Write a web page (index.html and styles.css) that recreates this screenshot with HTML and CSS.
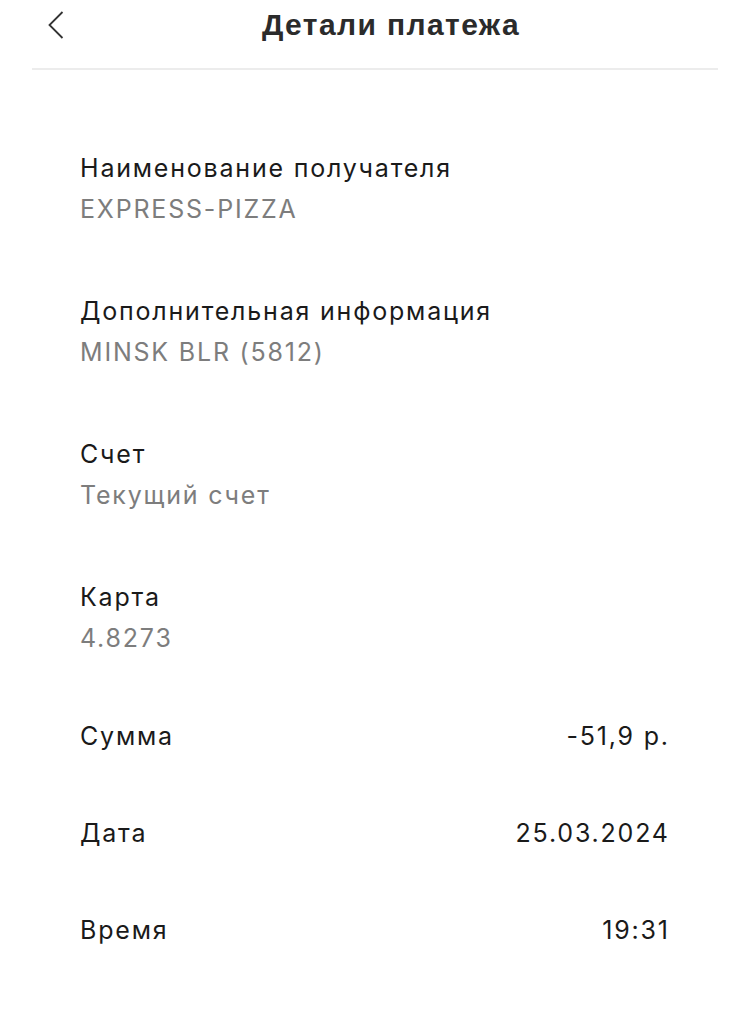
FILE: index.html
```html
<!DOCTYPE html>
<html lang="ru">
  <head>
    <meta charset="UTF-8" />
    <meta name="viewport" content="width=device-width, initial-scale=1.0" />
    <title>Детали платежа</title>
    <link rel="stylesheet" href="styles.css">
  </head>
  <body>
    <header class="topbar">
      <button class="back" aria-label="Назад">
        <svg width="16" height="28" viewBox="0 0 16 28">
          <polyline points="14.5,1 1.5,14 14.5,27" fill="none" stroke="#333" stroke-width="1.8" />
        </svg>
      </button>
      <h1>Детали платежа</h1>
      <span></span>
    </header>

    <main class="details">
      <div class="field">
        <div class="label">Наименование получателя</div>
        <div class="value">EXPRESS-PIZZA</div>
      </div>
      <div class="field">
        <div class="label">Дополнительная информация</div>
        <div class="value">MINSK BLR (5812)</div>
      </div>
      <div class="field">
        <div class="label">Счет</div>
        <div class="value">Текущий счет</div>
      </div>
      <div class="field">
        <div class="label">Карта</div>
        <div class="value">4.8273</div>
      </div>

      <div class="rows">
        <div class="row">
          <span class="label">Сумма</span>
          <span class="amount">-51,9 р.</span>
        </div>
        <div class="row">
          <span class="label">Дата</span>
          <span class="amount">25.03.2024</span>
        </div>
        <div class="row">
          <span class="label">Время</span>
          <span class="amount">19:31</span>
        </div>
      </div>
    </main>
  </body>
</html>
```

FILE: styles.css
```css
body {
  margin: 0;
  background: #fff;
  font-family: Inter, 'Noto Sans', sans-serif;
  color: #1a1a1a;
}
.topbar {
  display: grid;
  grid-template-columns: 48px 1fr 16px;
  align-items: center;
  height: 68px;
  margin: 0 32px;
  border-bottom: 2px solid #ececec;
}
.back {
  background: none;
  border: none;
  padding: 0;
  margin: 0 0 0 16px;
  width: 16px;
  height: 28px;
  display: flex;
  align-items: center;
  margin-top: -18px;
  cursor: pointer;
}
.topbar h1 {
  margin: 0 0 18px;
  text-align: center;
  font-family: 'Liberation Sans', Arial, sans-serif;
  font-weight: 700;
  font-size: 30px;
  letter-spacing: 1.4px;
  color: #2b2b2b;
  line-height: 34px;
}
.details {
  padding: 78px 82px 0 80px;
}
.field {
  margin-bottom: 61px;
}
.label,
.value,
.amount {
  font-size: 25px;
  line-height: 41px;
  letter-spacing: 1.8px;
}
.label {
  color: #1a1a1a;
}
.value {
  color: #7d7d7d;
}
.rows {
  display: flex;
  flex-direction: column;
  gap: 56px;
  margin-top: -4px;
}
.row {
  display: flex;
  justify-content: space-between;
  align-items: baseline;
}
.amount {
  color: #1a1a1a;
  margin-right: -1.8px;
}
```
